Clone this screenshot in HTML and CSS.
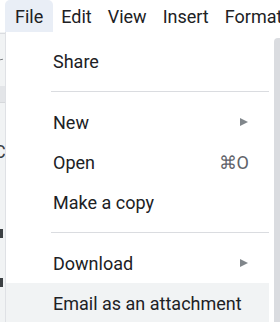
FILE: index.html
```html
<!DOCTYPE html>
<html>
<head>
<meta charset="utf-8">
<link rel="stylesheet" href="styles.css">
</head>
<body>
<div class="menubar">
  <span class="mb-item active">File</span>
  <span class="mb-item">Edit</span>
  <span class="mb-item">View</span>
  <span class="mb-item">Insert</span>
  <span class="mb-item">Format</span>
</div>
<div class="stage">
  <div class="doc-strip">
    <div class="ds-line"></div>
    <div class="ds-dash"></div>
    <div class="ds-band"></div>
    <div class="ds-c">C</div>
    <div class="ds-block b1"></div>
    <div class="ds-block b2"></div>
  </div>
  <div class="menu">
    <div class="item">Share</div>
    <div class="sep"></div>
    <div class="item"><span>New</span><span class="arrow"></span></div>
    <div class="item"><span>Open</span><span class="shortcut">⌘O</span></div>
    <div class="item">Make a copy</div>
    <div class="sep"></div>
    <div class="item"><span>Download</span><span class="arrow"></span></div>
    <div class="item hover">Email as an attachment</div>
  </div>
  <div class="gap"></div>
  <div class="scroll"></div>
</div>
</body>
</html>
```
FILE: styles.css
```css
* { box-sizing: border-box; }
html, body { margin: 0; padding: 0; }
body {
  width: 280px;
  height: 322px;
  overflow: hidden;
  background: #fff;
  font-family: Roboto, "Liberation Sans", sans-serif;
  color: #202124;
}
.menubar {
  height: 32px;
  display: flex;
  align-items: stretch;
  padding-left: 5px;
  white-space: nowrap;
  background: #fff;
  overflow: hidden;
}
.mb-item {
  display: flex;
  align-items: center;
  padding: 0 8px;
  font-size: 18px;
  color: #202124;
  flex: none;
}
.mb-item.active {
  padding: 0 10px;
  background: #e9eef6;
  border-radius: 5px 5px 0 0;
}
.stage {
  display: flex;
  height: 290px;
}
.doc-strip {
  width: 6px;
  flex: none;
  background: #f1f3f4;
  border-right: 1px solid #dfe1e5;
  position: relative;
  overflow: hidden;
}
.ds-line { position: absolute; left: 0; top: 1px; width: 5px; height: 1px; background: #dadce0; }
.ds-dash { position: absolute; left: 0; top: 27px; width: 3px; height: 1px; background: #5f6368; transform: rotate(-15deg); }
.ds-band { position: absolute; left: 0; top: 54px; width: 5px; height: 17px; background: #e3e5e8; border-bottom: 1px solid #d6d8db; }
.ds-c { position: absolute; left: -6px; top: 110px; font-size: 18px; color: #3c4043; line-height: 20px; }
.ds-block { position: absolute; left: 0; width: 3px; height: 9px; background: #3c4043; }
.b1 { top: 197px; }
.b2 { top: 246px; }
.menu {
  width: 263px;
  flex: none;
  background: #fff;
  padding-top: 9px;
}
.item {
  height: 40px;
  display: flex;
  align-items: center;
  justify-content: space-between;
  padding: 0 20px 0 47px;
  font-size: 18px;
  color: #202124;
  white-space: nowrap;
}
.item.hover { background: #f1f3f4; }
.sep {
  height: 1px;
  background: #dadce0;
  margin: 10px 0 10px 45px;
}
.arrow {
  width: 0;
  height: 0;
  border-left: 8px solid #80868b;
  border-top: 4px solid transparent;
  border-bottom: 4px solid transparent;
  margin-right: 1px;
}
.shortcut { color: #5f6368; font-size: 18px; }
.gap { width: 5px; flex: none; background: #fff; }
.scroll {
  flex: 1;
  margin-top: 6px;
  background: #dadce0;
  border-radius: 4px 0 0 0;
}
```
